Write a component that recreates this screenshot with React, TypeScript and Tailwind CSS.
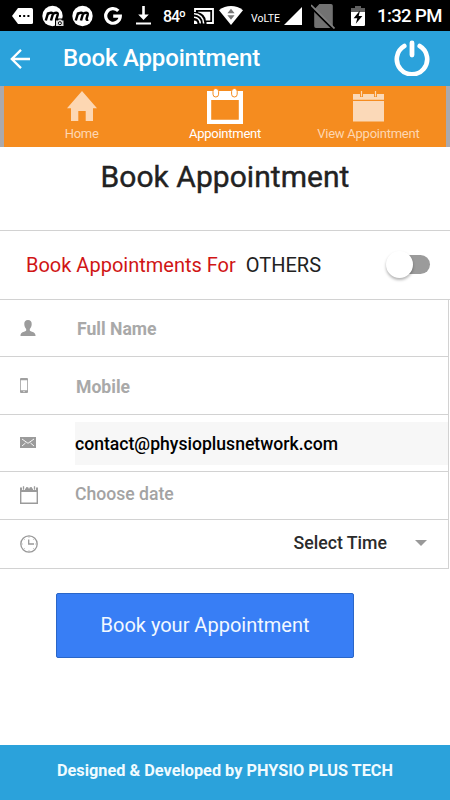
import type { ReactNode } from "react";

function StatusBar() {
  return (
    <div className="flex h-[31px] items-center bg-black text-white">
      <svg width="21" height="16" viewBox="0 0 21 16" className="ml-3 shrink-0" fill="#fff">
        <path d="M6 0h13.5a1.5 1.5 0 0 1 1.5 1.5v13a1.5 1.5 0 0 1-1.5 1.5H6L0 8z" />
        <path d="M7 7h2v2H7zM11.2 7h2v2h-2zM15.4 7h2v2h-2z" fill="#000" />
      </svg>
      <MotoIcon className="ml-[9px] shrink-0" camera />
      <MotoIcon className="ml-[8px] shrink-0" />
      <svg width="18" height="18" viewBox="0 0 18 18" className="ml-[10px] shrink-0" fill="none">
        <path d="M14.3 3.9A7.3 7.3 0 1 0 16.3 9.2H9.2" stroke="#fff" strokeWidth="3.2" />
      </svg>
      <svg width="15" height="19" viewBox="0 0 15 19" className="ml-[14px] shrink-0" fill="#fff">
        <path d="M6.2 0h2.6v8.6h4L7.5 14 2.2 8.6h4zM0 16.6h15v2H0z" />
      </svg>
      <span className="ml-[12px] mt-[2px] w-[22px] whitespace-nowrap text-[16px] font-medium leading-none tracking-[-1.2px]">
        84º
      </span>
      <svg width="20" height="16" viewBox="0 0 20 16" className="ml-[9px] shrink-0" fill="none" stroke="#fff">
        <path d="M1 4V1h18v14h-6.5" strokeWidth="1.8" />
        <path d="M4 4.2V3.8h12.3v8.6h-4.5A9 9 0 0 0 4 4.2z" fill="#fff" stroke="none" />
        <path d="M0 5.8A9.4 9.4 0 0 1 9.6 15.4M0 9.2A6 6 0 0 1 6.2 15.4" strokeWidth="1.6" />
        <path d="M0 12.4a3.4 3.4 0 0 1 3.4 3.6H0z" fill="#fff" stroke="none" />
      </svg>
      <svg width="24" height="19" viewBox="0 0 24 19" className="ml-[5px] shrink-0">
        <path d="M0 4.2C7-1.4 17-1.4 24 4.2L12 19z" fill="#fff" />
        <path d="M12 2.7l3.6 4.5H8.4zM12 13.7L8.4 9.2h7.2z" fill="#777" />
      </svg>
      <span className="ml-[8px] mt-2 w-[29px] whitespace-nowrap text-[10.5px] leading-none">VoLTE</span>
      <svg width="18" height="18" viewBox="0 0 18 18" className="ml-[4px] shrink-0">
        <path d="M18 0v18H0z" fill="#fff" />
      </svg>
      <svg width="24" height="26" viewBox="0 0 24 26" className="ml-[9px] shrink-0">
        <path d="M8.4 1H20a1.8 1.8 0 0 1 1.8 1.8v20.4A1.8 1.8 0 0 1 20 25H5a1.8 1.8 0 0 1-1.8-1.8V6.4z" fill="#727272" />
        <path d="M-1 3.4l23 22.8" stroke="#000" strokeWidth="2" />
        <path d="M0 2l23.5 23.5" stroke="#808080" strokeWidth="1.7" />
      </svg>
      <svg width="14" height="20" viewBox="0 0 14 20" className="ml-[16px] shrink-0">
        <path d="M4 0h6v2h4v5H0V2h4z" fill="#606060" />
        <path d="M0 6h14v12.8a1.2 1.2 0 0 1-1.2 1.2H1.2A1.2 1.2 0 0 1 0 18.8z" fill="#fff" />
        <path d="M9 4.5L2.6 12.3H6.3L4.8 17.8 11.4 10H7.7z" fill="#000" />
      </svg>
      <span className="ml-[12px] mt-[2px] whitespace-nowrap text-[18.5px] font-medium leading-none tracking-[-0.6px]">
        1:32 PM
      </span>
    </div>
  );
}

function MotoIcon({ className, camera }: { className: string; camera?: boolean }) {
  return (
    <svg width="22" height="22" viewBox="0 0 22 22" className={className} fill="none">
      <circle cx="10.5" cy="11" r="10.2" fill="#fff" />
      <path
        d="M3.8 15.5L6.2 7.5M5.8 9.5C7.5 7.6 11.2 7 10.7 9.6L9 15.5M10.8 9.5C12.5 7.6 16.3 7 15.7 9.6L14.6 13.5Q14.2 15.3 16.2 14.5"
        stroke="#000"
        strokeWidth="2.5"
      />
      {camera && (
        <>
          <rect x="13" y="13.5" width="9" height="8.5" fill="#000" />
          <path d="M14 15.5h2l.8-1h2.4l.8 1h1.5V21H14z" fill="#ddd" />
          <circle cx="17.9" cy="18.2" r="1.5" fill="#fff" stroke="#000" />
        </>
      )}
    </svg>
  );
}

function Header() {
  return (
    <div className="flex h-[55px] items-center bg-[#2ba2db] text-white">
      <svg width="20" height="20" viewBox="0 0 20 20" className="ml-[10px]" fill="none" stroke="#fff" strokeWidth="2.3">
        <path d="M20 10H2M11 0.9L1.8 10l9.2 9.1" />
      </svg>
      <h1 className="-mt-[2px] ml-[33px] whitespace-nowrap text-[24px] font-medium leading-none tracking-[-0.17px]">
        Book Appointment
      </h1>
      <svg
        width="36"
        height="36"
        viewBox="0 0 36 36"
        className="-mt-[2px] ml-auto mr-[20px]"
        fill="none"
        stroke="#fff"
        strokeLinecap="round"
      >
        <path d="M10.3 6A15.2 15.2 0 1 0 25.7 6" strokeWidth="4.6" />
        <path d="M18 3v12" strokeWidth="4.8" />
      </svg>
    </div>
  );
}

function Tab({ icon, label, active }: { icon: ReactNode; label: string; active?: boolean }) {
  return (
    <div className={`flex flex-1 flex-col items-center ${active ? "text-white" : "text-[#fdd7b2]"}`}>
      <div className="flex h-[39px] items-end">{icon}</div>
      <span className="whitespace-nowrap text-[13px] leading-[17px] tracking-[-0.25px]">{label}</span>
    </div>
  );
}

function Tabs() {
  return (
    <div className="flex h-[61px] border-l-[4px] border-r-[4px] border-[#aaa9ad] bg-[#f58c1f] pl-[6px] pr-[6px]">
      <Tab
        label="Home"
        icon={
          <svg width="30" height="34" viewBox="0 0 30 34" fill="currentColor">
            <path d="M15 0l15 17.3h-4V30h-7.3V20H11.3V30H4V17.3H0z" />
          </svg>
        }
      />
      <Tab
        active
        label="Appointment"
        icon={
          <svg width="36" height="37" viewBox="0 0 36 37">
            <path fillRule="evenodd" d="M0 3h36v33H0zM4.2 12v19.8h27.6V12z" fill="#fff" />
            <rect x="6" y="0.5" width="5.6" height="8.5" rx="2.8" fill="#fff" stroke="#f58c1f" />
            <rect x="24.6" y="0.5" width="5.6" height="8.5" rx="2.8" fill="#fff" stroke="#f58c1f" />
          </svg>
        }
      />
      <Tab
        label="View Appointment"
        icon={
          <svg width="31" height="35" viewBox="0 0 31 35" fill="#fbd9b8">
            <path d="M0 4h31v5.7H0zM0 11h31v20.5H0z" />
            <path d="M8.5 1v6M22.5 1v6" stroke="#f58c1f" strokeWidth="3" />
            <path d="M8.5 1v5.5M22.5 1v5.5" stroke="#fbd9b8" strokeWidth="1.2" />
          </svg>
        }
      />
    </div>
  );
}

function PersonIcon() {
  return (
    <svg width="16" height="16" viewBox="0 0 16 16" fill="#9c9c9c">
      <path d="M8 0c2.6 0 3.9 1.7 3.7 4.2-.1 2.2-.9 3.6-1.9 4.7v1.5c.6 1.3 5.7 1.3 5.7 4.8V16H.5v-.8c0-3.5 5.1-3.5 5.7-4.8V8.900C5.200 7.800 4.400 6.400 4.300 4.200 4.100 1.700 5.400 0 8 0z" />
    </svg>
  );
}

function PhoneIcon() {
  return (
    <svg width="8" height="15" viewBox="0 0 8 15">
      <path
        fillRule="evenodd"
        d="M1 0h6a1 1 0 0 1 1 1v13a1 1 0 0 1-1 1H1a1 1 0 0 1-1-1V1a1 1 0 0 1 1-1zM.8 2.2v10h6.4v-10z"
        fill="#a0a0a0"
      />
      <circle cx="4" cy="13.6" r=".7" fill="#fff" />
    </svg>
  );
}

function MailIcon() {
  return (
    <svg width="16" height="11" viewBox="0 0 16 11" className="-mt-[2px]">
      <path d="M0 0h16v11H0z" fill="#9b9b9b" />
      <path d="M2 2l6 4.3L14 2M2 9l3.5-3M14 9l-3.5-3" fill="none" stroke="#fff" strokeWidth=".9" />
    </svg>
  );
}

function CalendarIcon() {
  return (
    <svg width="18" height="18" viewBox="0 0 18 18" className="-mt-[2px]">
      <path fillRule="evenodd" d="M0 1.5h18V18H0zM1.4 6v10.6h15.2V6z" fill="#9b9b9b" />
      <path d="M3.5 0v4M14.5 0v4" stroke="#fff" strokeWidth="3" />
      <path d="M3.5 .3v3.4M14.5 .3v3.4M7 1v2M11 1v2" stroke="#9b9b9b" strokeWidth="1.3" />
      <path d="M5.5 1v1.5M9 1v1.5M12.5 1v1.5" stroke="#fff" />
    </svg>
  );
}

function ClockIcon() {
  return (
    <svg width="18" height="18" viewBox="0 0 18 18" fill="none" stroke="#999">
      <circle cx="9" cy="9" r="8.2" strokeWidth="1.3" />
      <path d="M8.7 4.5V9H14" strokeWidth="1.3" />
      <path
        d="M9 1.5v1.2M9 15.3v1.2M1.5 9h1.2M15.3 9h1.2M3.8 3.8l.8.8M14.2 3.8l-.8.8M3.8 14.2l.8-.8M14.2 14.2l-.8-.8"
        strokeWidth=".8"
      />
    </svg>
  );
}

function Row({ icon, className, children }: { icon: ReactNode; className: string; children: ReactNode }) {
  return (
    <div className={`flex items-center border-b border-[#d2d2d2] ${className}`}>
      <div className="ml-[20px] w-[55px] shrink-0">{icon}</div>
      {children}
    </div>
  );
}

export default function App() {
  return (
    <div className="flex h-[800px] w-[450px] flex-col overflow-hidden bg-white font-['Roboto',sans-serif]">
      <StatusBar />
      <Header />
      <Tabs />

      <div className="flex h-[84px] justify-center border-b border-[#d2d2d2] pt-[12px]">
        <h2 className="whitespace-nowrap text-[30px] leading-[36px] tracking-[0.04px] text-[#222] [-webkit-text-stroke:0.4px_#222]">
          Book Appointment
        </h2>
      </div>

      <div className="flex h-[69px] items-center border-b border-[#d2d2d2] pl-[26px] pr-[20px] text-[20px]">
        <span className="whitespace-nowrap text-[#d01515]">Book Appointments For</span>
        <span className="ml-[10px] text-[#222]">OTHERS</span>
        <div className="-mt-[2px] ml-auto flex h-[19px] w-[39px] items-center rounded-full bg-[#9b9b9b]">
          <div className="-ml-[5px] h-[27px] w-[27px] shrink-0 rounded-full bg-white shadow-[0_2px_3px_rgba(0,0,0,0.3)]" />
        </div>
      </div>

      <div className="w-[449px] border-r border-[#d2d2d2] text-[17.6px] font-medium text-[#a3a3a3]">
        <Row icon={<PersonIcon />} className="h-[57px]">
          <span className="ml-[2px] mt-[3px] text-[17.6px] font-bold text-[#a9a9a9]">Full Name</span>
        </Row>
        <Row icon={<PhoneIcon />} className="h-[58px]">
          <span className="ml-px mt-[3px] text-[17.6px] font-bold text-[#a9a9a9]">Mobile</span>
        </Row>
        <Row icon={<MailIcon />} className="h-[57px]">
          <div className="mt-px flex h-[43px] flex-1 items-center bg-[#f7f7f7] pt-px text-black">
            contact@physioplusnetwork.com
          </div>
        </Row>
        <Row icon={<CalendarIcon />} className="h-[48px]">
          <span className="-mt-[2px]">Choose date</span>
        </Row>
        <Row icon={<ClockIcon />} className="h-[49px]">
          <span className="-mt-[2px] ml-auto text-[17.7px] text-[#2b2b2b]">Select Time</span>
          <svg width="12" height="6" viewBox="0 0 12 6" className="-mt-[2px] ml-[28px] mr-[21px]" fill="#999">
            <path d="M0 0h12L6 6z" />
          </svg>
        </Row>
      </div>

      <button className="ml-[56px] mt-[24px] h-[65px] w-[298px] rounded-[2px] border border-[#2a66c8] bg-[#387ef5] pb-[2px] text-[20px] text-[#f2f8ff]">
        Book your Appointment
      </button>

      <div className="mt-auto flex h-[55px] items-center justify-center bg-[#2ba2db] pb-[3px] text-[16.3px] font-bold text-[#f0fbff]">
        Designed &amp; Developed by PHYSIO PLUS TECH
      </div>
    </div>
  );
}
